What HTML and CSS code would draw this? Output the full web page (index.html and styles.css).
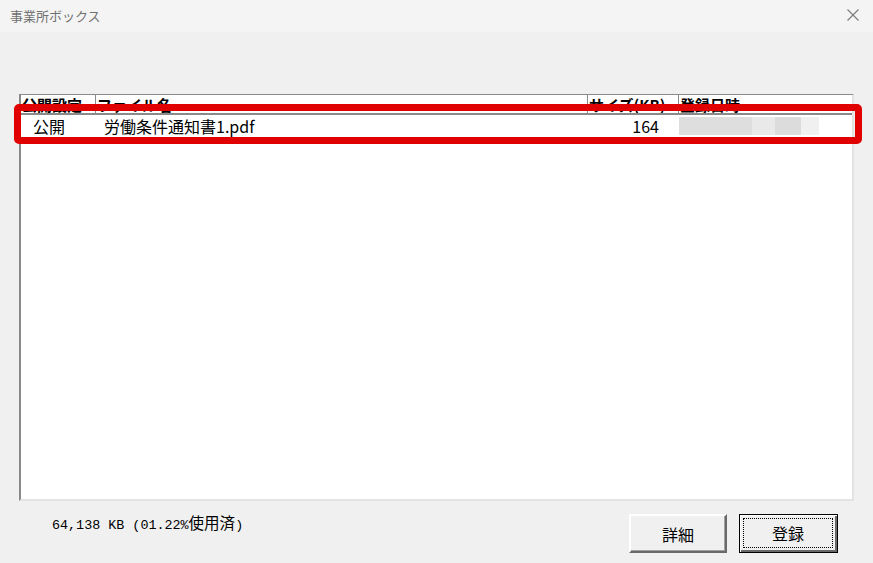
FILE: index.html
```html
<!DOCTYPE html>
<html lang="ja">
<head>
  <meta charset="UTF-8" />
  <title>事業所ボックス</title>
  <link rel="stylesheet" href="styles.css">
</head>
<body>

  <div class="window">
    <div class="titlebar">
      <span class="title">事業所ボックス</span>
      <svg class="close" width="12" height="12" viewBox="0 0 12 12">
        <path d="M0.5 0.5 L11.5 11.5 M11.5 0.5 L0.5 11.5" stroke="#7a7a7a" stroke-width="1.1" fill="none"/>
      </svg>
    </div>

    <div class="content">
      <div class="listbox">
        <div class="list-header">
          <div class="col col-public">公開設定</div>
          <div class="col col-name">ファイル名</div>
          <div class="col col-size">サイズ(KB)</div>
          <div class="col col-date">登録日時</div>
        </div>
        <div class="list-row">
          <div class="col col-public">公開</div>
          <div class="col col-name">労働条件通知書1.pdf</div>
          <div class="col col-size">164</div>
          <div class="col col-date">
            <span class="blur b1"></span><span class="blur b2"></span><span class="blur b3"></span><span class="blur b4"></span>
          </div>
        </div>
      </div>

      <div class="footer">
        <div class="usage">64,138 KB (01.22%<span class="wide">使用済</span>)</div>
        <button class="btn">詳細</button>
        <button class="btn btn-default"><span class="focus">登録</span></button>
      </div>
    </div>

    <div class="highlight"></div>
  </div>

</body>
</html>
```

FILE: styles.css
```css
body {
  margin: 0;
  background-color: #f0f0f0;
  font-family: "Noto Sans CJK JP", sans-serif;
  color: #000;
}

.window {
  position: relative;
  width: 873px;
  height: 563px;
  background-color: #f0f0f0;
  overflow: hidden;
}

.titlebar {
  height: 32px;
  background-color: #f4f4f4;
  display: flex;
  align-items: center;
  justify-content: space-between;
  padding: 0 14px 0 10px;
  box-sizing: border-box;
}

.title {
  font-size: 13px;
  color: #707070;
  margin-top: -2px;
}

.close {
  margin-top: -2px;
}

.content {
  padding: 62px 0 0 19px;
}

.listbox {
  width: 835px;
  height: 407px;
  box-sizing: border-box;
  background-color: #fff;
  border-left: 2px solid #8a8a8a;
  border-top: 1px solid #8a8a8a;
  border-right: 2px solid #e3e3e3;
  border-bottom: 2px solid #e3e3e3;
}

.list-header,
.list-row {
  display: flex;
}

.list-header {
  height: 18px;
  border-bottom: 2px solid #8a8a8a;
  font-weight: bold;
  font-size: 15px;
  line-height: 20px;
  overflow: hidden;
}

.list-header .col {
  border-right: 1px solid #8a8a8a;
  padding-left: 1px;
}

.col {
  box-sizing: border-box;
  white-space: nowrap;
  overflow: hidden;
}

.col-public { width: 75px; }
.col-name { width: 492px; }
.col-size { width: 91px; }
.col-date { flex: 1; }

.list-header .col-date {
  border-right: none;
}

.list-row {
  height: 22px;
  font-size: 16px;
  line-height: 22px;
}

.list-row .col-public {
  padding-left: 12px;
}

.list-row .col-name {
  padding-left: 8px;
}

.list-row .col-size {
  text-align: right;
  padding-right: 20px;
}

.list-row .col-date {
  display: flex;
  align-items: center;
}

.blur {
  display: inline-block;
  height: 18px;
}

.b1 { width: 73px; background-color: #dedede; }
.b2 { width: 23px; background-color: #e9e9e9; }
.b3 { width: 26px; background-color: #dcdcdc; }
.b4 { width: 18px; background-color: #f0f0f0; }

.footer {
  display: flex;
  align-items: flex-start;
  padding: 13px 35px 0 33px;
  gap: 12px;
}

.usage {
  flex: 1;
  font-family: "Liberation Mono", "Noto Sans CJK JP", monospace;
  font-size: 13.4px;
  line-height: 16px;
}

.wide {
  font-family: "Noto Sans CJK JP", sans-serif;
  font-size: 15.5px;
}

.btn {
  width: 98px;
  height: 39px;
  background-color: #f0f0f0;
  font-family: "Noto Sans CJK JP", sans-serif;
  font-size: 16px;
  color: #000;
  border-style: solid;
  border-width: 2px;
  border-color: #fff #696969 #696969 #fff;
  box-shadow: inset -1px -1px 0 #a0a0a0;
  padding: 0;
  cursor: pointer;
}

.btn-default {
  width: 99px;
  border: 1px solid #000;
  box-shadow: inset 1px 1px 0 #fff, inset -2px -2px 0 #696969;
  padding: 3px 4px 4px 3px;
}

.focus {
  display: flex;
  align-items: center;
  justify-content: center;
  height: 100%;
  border: 1px dotted #000;
  box-sizing: border-box;
}

.highlight {
  position: absolute;
  left: 14px;
  top: 104px;
  width: 848px;
  height: 40px;
  box-sizing: border-box;
  border: 7px solid #e00000;
  border-radius: 5px;
}
```
